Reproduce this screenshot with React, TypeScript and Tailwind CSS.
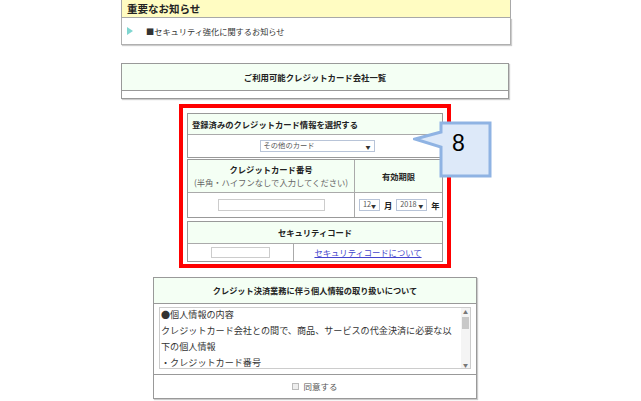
import React from "react";

const jp = { fontFamily: '"Noto Sans CJK JP", "Noto Sans", sans-serif' };

function Sel({ label, w }: { label: string; w: string }) {
  return (
    <span
      className={`inline-flex items-center justify-between h-[12px] border border-[#b8c4d8] bg-white pl-[3px] pr-[3px] text-[7.3px] font-normal text-[#555] leading-none ${w}`}
    >
      <span>{label}</span>
      <span className="text-[5px] text-[#333]">▼</span>
    </span>
  );
}

export default function App() {
  return (
    <div
      className="relative w-[641px] h-[401px] overflow-hidden bg-white text-[#333]"
      style={jp}
    >
      {/* 重要なお知らせ */}
      <div className="ml-[121px] w-[390px]">
        <div className="h-[18px] bg-[#fffcc2] border-x border-b border-[#a8a8a8] px-[5px] flex items-center">
          <span className="text-[10.5px] font-bold leading-[12px] text-[#222]">
            重要なお知らせ
          </span>
        </div>
        <div className="h-[27px] border-x border-b border-[#b0b0b0] shadow-[1px_1px_1px_#ccc] flex items-center pl-[5px]">
          <span className="w-0 h-0 border-y-[4px] border-y-transparent border-l-[6px] border-l-[#7fd6d0]" />
          <span className="ml-[13px] text-[8.2px] text-[#333] leading-none">
            ■セキュリティ強化に関するお知らせ
          </span>
        </div>

        <div className="mt-[18px] w-[388px] border border-[#999] shadow-[1px_1px_1px_#ccc]">
          <div className="h-[26px] bg-[#f4fff4] flex items-center justify-center text-[8.4px] font-bold text-[#222]">
            ご利用可能クレジットカード会社一覧
          </div>
          <div className="h-[8px] border-t border-[#999]" />
        </div>
      </div>

      {/* Red framed section */}
      <div className="mt-[5px] ml-[179px] w-[272px] h-[164px] border-4 border-[#ff0000] px-[4px] pt-[5px]">
        <div className="border border-[#999]">
          <div className="h-[21px] bg-[#f4fff4] border-b border-[#aaa] flex items-center pl-[4px] text-[8.3px] font-bold text-[#222]">
            登録済みのクレジットカード情報を選択する
          </div>
          <div className="h-[22px] flex items-center justify-center">
            <Sel label="その他のカード" w="w-[115px] ml-[4px]" />
          </div>
        </div>
        <div className="mt-[1px] border border-[#999]">
          <div className="h-[33px] flex bg-[#f4fff4] border-b border-[#aaa]">
            <div className="w-[167px] border-r border-[#aaa] flex flex-col items-center justify-center leading-[13px]">
              <span className="text-[8.3px] font-bold text-[#222]">クレジットカード番号</span>
              <span className="text-[8.3px] text-[#666]">(半角・ハイフンなしで入力してください)</span>
            </div>
            <div className="flex-1 flex items-center justify-center text-[8.3px] font-bold text-[#222]">
              有効期限
            </div>
          </div>
          <div className="h-[24px] flex">
            <div className="w-[167px] border-r border-[#aaa] flex items-center justify-center">
              <span className="w-[107px] h-[12px] border border-[#ccc] bg-white" />
            </div>
            <div className="flex-1 flex items-center pl-[4px] gap-[4px] text-[8.3px] font-bold text-[#222]">
              <Sel label="12" w="w-[21px]" />
              <span>月</span>
              <Sel label="2018" w="w-[31px]" />
              <span>年</span>
            </div>
          </div>
        </div>
        <div className="mt-[3px] border border-[#999]">
          <div className="h-[22px] bg-[#f4fff4] border-b border-[#aaa] flex items-center justify-center text-[8.3px] font-bold text-[#222]">
            セキュリティコード
          </div>
          <div className="h-[17px] flex">
            <div className="w-[106px] border-r border-[#aaa] flex items-center justify-center">
              <span className="w-[59px] h-[11px] border border-[#ccc] bg-white" />
            </div>
            <div className="flex-1 flex items-center justify-center">
              <span className="text-[8.3px] text-[#4444cc] underline leading-none">
                セキュリティコードについて
              </span>
            </div>
          </div>
        </div>
      </div>

      {/* 個人情報 */}
      <div className="mt-[9px] ml-[153px] w-[324px] border border-[#999] shadow-[1px_1px_1px_#ccc]">
        <div className="h-[26px] bg-[#f4fff4] border-b border-[#999] flex items-center justify-center text-[8.2px] font-bold text-[#222]">
          クレジット決済業務に伴う個人情報の取り扱いについて
        </div>
        <div className="h-[70px] px-[5px] pt-[3px]">
          <div className="h-[62px] border border-[#ccc] flex">
            <div className="flex-1 pl-[1px] text-[9.1px] leading-[16px] text-[#333] overflow-hidden whitespace-nowrap">
              <div className="-mt-[2px]">●個人情報の内容</div>
              <div>クレジットカード会社との間で、商品、サービスの代金決済に必要な以</div>
              <div>下の個人情報</div>
              <div>・クレジットカード番号</div>
            </div>
            <div className="w-[9px] relative bg-[#f4f4f4]">
              <span className="absolute top-[1px] left-[2px] text-[5px] text-[#777] leading-none">▲</span>
              <span className="absolute top-[9px] left-[1px] w-[7px] h-[12px] bg-[#c8c8c8]" />
              <span className="absolute bottom-[1px] left-[2px] text-[5px] text-[#777] leading-none">▼</span>
            </div>
          </div>
        </div>
        <div className="h-[24px] border-t border-[#999] flex items-center justify-center gap-[4px]">
          <span className="w-[7px] h-[7px] border border-[#bbb] bg-[#eee]" />
          <span className="text-[8.5px] text-[#555]">同意する</span>
        </div>
      </div>

      {/* Callout annotation */}
      <div className="absolute left-[413px] top-[121px] w-[80px] h-[58px]">
        <svg width="80" height="58" viewBox="0 0 80 58" className="absolute inset-0">
          <path
            d="M28 2 H77 V55 H28 V26 L2 18 L28 11 Z"
            fill="#dde9f9"
            stroke="#8fb3e3"
            strokeWidth="3"
            strokeLinejoin="miter"
          />
        </svg>
        <span
          className="absolute left-[39px] top-[11px] text-[23px] leading-none text-black"
          style={{ fontFamily: '"Liberation Sans", Arial, sans-serif' }}
        >
          8
        </span>
      </div>
    </div>
  );
}
